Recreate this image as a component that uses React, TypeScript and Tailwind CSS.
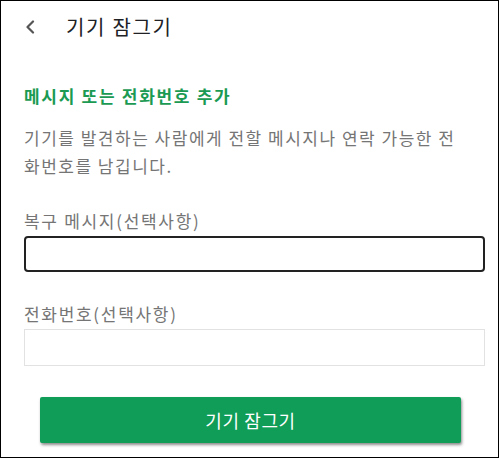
export default function App() {
  return (
    <div
      className="h-[459px] w-[500px] overflow-hidden bg-white"
      style={{ fontFamily: '"Noto Sans CJK KR", "Noto Sans", sans-serif' }}
    >
      <div className="flex h-[458px] w-[499px] flex-col border border-black px-[23px]">
        <header className="flex h-[52px] items-center">
          <svg width="10" height="14" viewBox="0 0 10 14" className="ml-[1px] text-[#555]">
            <path d="M8 1.5 L2.5 7 L8 12.5" fill="none" stroke="currentColor" strokeWidth="2.2" strokeLinecap="round" strokeLinejoin="round" />
          </svg>
          <h1 className="ml-[31px] text-[20px] tracking-[1.7px] text-[#202124]">기기 잠그기</h1>
        </header>

        <h2 className="mt-[28px] text-[17px] leading-[30px] font-bold tracking-[1.7px] text-[#1a9a52]">메시지 또는 전화번호 추가</h2>

        <p className="mt-[13px] pr-[6px] text-[17px] leading-[28px] tracking-[1.5px] break-all text-[#757575]">
          기기를 발견하는 사람에게 전할 메시지나 연락 가능한 전화번호를 남깁니다.
        </p>

        <label className="mt-[26px] block text-[17px] leading-[30px] tracking-[1.7px] text-[#757575]">복구 메시지(선택사항)</label>
        <input className="mt-0 h-[36px] w-[461px] rounded-[4px] border-2 border-[#222] px-2 text-[16px] outline-none" />

        <label className="mt-[27px] block text-[17px] leading-[30px] tracking-[1.7px] text-[#757575]">전화번호(선택사항)</label>
        <input className="mt-0 h-[37px] w-[461px] border border-[#e2e2e2] px-2 text-[16px] outline-none" />

        <button className="mt-[31px] ml-[16px] h-[46px] w-[421px] rounded-[2px] bg-[#0f9d58] text-[18px] tracking-[0.6px] text-white shadow-[1px_2px_3px_rgba(0,0,0,0.45)]">
          기기 잠그기
        </button>
      </div>
    </div>
  )
}
